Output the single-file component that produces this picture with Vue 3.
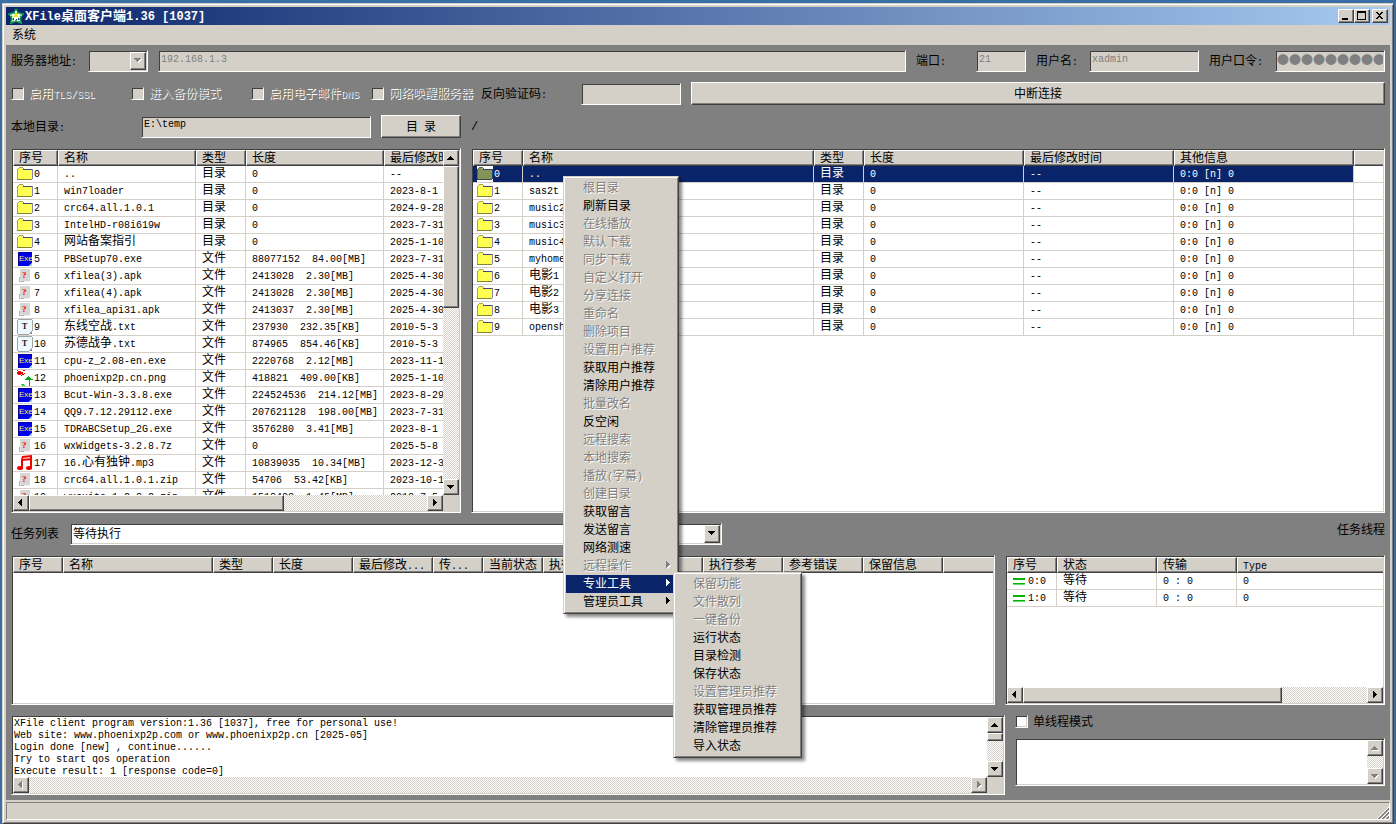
<script setup>
import { h } from 'vue'

// Latin runs are half as wide as a Han character, so they are set in a smaller monospace size.
const Txt = (props) =>
  h('span', { class: 'txt' }, String(props.v).split(/([\x20-\x7e]+)/).map((s, i) => (i % 2 ? h('span', { class: 'lat' }, s) : s)))
Txt.props = ['v']

const arrows = {
  up: 'M7 6h1v1h1v1h1v1h1v1H4V9h1V8h1V7h1z',
  down: 'M4 6h7v1h-1v1H9v1H8v1H7V9H6V8H5V7H4z',
  left: 'M9 4v7H8v-1H7V9H6V8H5V7h1V6h1V5h1V4z',
  right: 'M6 4v7h1v-1h1V9h1V8h1V7H9V6H8V5H7V4z'
}
const Arrow = (props) =>
  h('svg', { class: 'arrow', width: 16, height: 16, viewBox: '0 0 16 16', 'shape-rendering': 'crispEdges', 'aria-hidden': 'true' }, [
    props.off ? h('path', { d: arrows[props.dir], fill: '#fff', transform: 'translate(1 1)' }) : null,
    h('path', { d: arrows[props.dir], fill: props.off ? '#808080' : '#000' })
  ])
Arrow.props = { dir: String, off: Boolean }

const options = ['启用TLS/SSL', '进入备份模式', '启用电子邮件DNS', '网络唤醒服务器']

const localCols = [45, 138, 50, 138, 120]
const localHead = ['序号', '名称', '类型', '长度', '最后修改时间']
const localFiles = [
  ['folder', '..', '0', '--'],
  ['folder', 'win7loader', '0', '2023-8-1'],
  ['folder', 'crc64.all.1.0.1', '0', '2024-9-28'],
  ['folder', 'IntelHD-r08i619w', '0', '2023-7-31'],
  ['folder', '网站备案指引', '0', '2025-1-10'],
  ['exe', 'PBSetup70.exe', '88077152  84.00[MB]', '2023-7-31'],
  ['unknown', 'xfilea(3).apk', '2413028  2.30[MB]', '2025-4-30'],
  ['unknown', 'xfilea(4).apk', '2413028  2.30[MB]', '2025-4-30'],
  ['unknown', 'xfilea_api31.apk', '2413037  2.30[MB]', '2025-4-30'],
  ['text', '东线空战.txt', '237930  232.35[KB]', '2010-5-3'],
  ['text', '苏德战争.txt', '874965  854.46[KB]', '2010-5-3'],
  ['exe', 'cpu-z_2.08-en.exe', '2220768  2.12[MB]', '2023-11-1'],
  ['image', 'phoenixp2p.cn.png', '418821  409.00[KB]', '2025-1-10'],
  ['exe', 'Bcut-Win-3.3.8.exe', '224524536  214.12[MB]', '2023-8-29'],
  ['exe', 'QQ9.7.12.29112.exe', '207621128  198.00[MB]', '2023-7-31'],
  ['exe', 'TDRABCSetup_2G.exe', '3576280  3.41[MB]', '2023-8-1'],
  ['unknown', 'wxWidgets-3.2.8.7z', '0', '2025-5-8'],
  ['music', '16.心有独钟.mp3', '10839035  10.34[MB]', '2023-12-3'],
  ['unknown', 'crc64.all.1.0.1.zip', '54706  53.42[KB]', '2023-10-1'],
  ['unknown', 'wxsuite-1.2.8.2.zip', '1518483  1.45[MB]', '2018-7-5']
]
const kind = (icon) => (icon === 'folder' ? '目录' : '文件')

const remoteCols = [50, 291, 50, 160, 150, 180]
const remoteHead = ['序号', '名称', '类型', '长度', '最后修改时间', '其他信息', '']
const remoteFiles = ['..', 'sas2t', 'music2', 'music3', 'music4', 'myhome', '电影1', '电影2', '电影3', 'openshare']

const taskCols = [50, 150, 60, 80, 80, 50, 60, 80, 80, 80, 80, 80]
const taskHead = ['序号', '名称', '类型', '长度', '最后修改...', '传...', '当前状态', '执行', '', '执行参考', '参考错误', '保留信息', '']

const threadCols = [50, 100, 80]
const threadHead = ['序号', '状态', '传输', 'Type']

const logText = [
  'XFile client program version:1.36 [1037], free for personal use!',
  'Web site: www.phoenixp2p.com or www.phoenixp2p.cn [2025-05]',
  'Login done [new] , continue......',
  'Try to start qos operation',
  'Execute result: 1 [response code=0]'
].join('\n')

const on = (label) => ({ label })
const off = (label) => ({ label, disabled: true })
const menu = [
  off('根目录'), on('刷新目录'), off('在线播放'), off('默认下载'), off('同步下载'), off('自定义打开'),
  off('分享连接'), off('重命名'), off('删除项目'), off('设置用户推荐'), on('获取用户推荐'), on('清除用户推荐'),
  off('批量改名'), on('反空闲'), off('远程搜索'), off('本地搜索'), off('播放(字幕)'), off('创建目录'),
  on('获取留言'), on('发送留言'), on('网络测速'),
  { label: '远程操作', disabled: true, sub: true },
  { label: '专业工具', sub: true, active: true },
  { label: '管理员工具', sub: true }
]
const submenu = [
  off('保留功能'), off('文件散列'), off('一键备份'), on('运行状态'), on('目录检测'), on('保存状态'),
  off('设置管理员推荐'), on('获取管理员推荐'), on('清除管理员推荐'), on('导入状态')
]
</script>

<template>
  <div class="desktop">
    <svg class="defs" aria-hidden="true">
      <symbol id="i-folder" viewBox="0 0 16 16">
        <path d="M1 4V2h4l2 2h8v9H1z" fill="#ffff52" />
        <path d="M0 13V3h1v10zM1 2h1V1h4v1h1v1H6V2H2v1H1z" fill="#a5a54a" />
        <path d="M6 3h9v1H6z" fill="#4a4a6b" />
        <path d="M15 3h1v10h-1z" fill="#8484b5" />
        <path d="M0 13h15v1H0z" fill="#84842a" />
      </symbol>
      <symbol id="i-folder-sel" viewBox="0 0 16 16">
        <path d="M0 0h16v16H0z" fill="#fff" />
        <path d="M1 4V2h4l2 2h8v9H1z" fill="#84935a" />
        <path d="M0 13V3h1v10zM1 2h1V1h4v1h1v1H6V2H2v1H1z" fill="#5a6650" />
        <path d="M6 3h9v1H6zM15 3h1v10h-1z" fill="#31426b" />
        <path d="M0 13h15v1H0z" fill="#3a4a4a" />
      </symbol>
      <symbol id="i-exe" viewBox="0 0 16 16">
        <path d="M1 1h14v11l-3 3H1z" fill="#0000ee" />
        <path d="M1 1h14v1H2v13H1z" fill="#000094" />
        <path d="M12 15l3-3v3z" fill="#8ce0f0" />
        <text x="2" y="10" font-size="8" font-family="Liberation Sans, sans-serif" fill="#f0f050">Exe</text>
      </symbol>
      <symbol id="i-unknown" viewBox="0 0 16 16">
        <path d="M3 1h10v12H3z" fill="#d6d6d6" />
        <path d="M2 10l4 4H2zM6 13h7v1H6z" fill="#f0f0f0" />
        <path d="M2 9h1v5H2zM3 13h4v1H3z" fill="#b4b4b4" />
        <text x="5" y="10" font-size="9" font-weight="700" font-family="Liberation Serif, serif" fill="#f00000">?</text>
      </symbol>
      <symbol id="i-text" viewBox="0 0 16 16">
        <path d="M1 1h14v11l-3 3H1z" fill="#eef8ff" />
        <path d="M0 1h1v14H0zM1 0h14v1H1zM15 1h1v11h-1zM1 15h11v1H1zM14 12h1v1h-1zM13 13h1v1h-1zM12 14h1v1h-1z" fill="#9ca6ad" />
        <path d="M15 13v2h-2z" fill="#5a646b" />
        <text x="5" y="10" font-size="8" font-weight="700" font-family="Liberation Serif, serif" fill="#101820">T</text>
      </symbol>
      <symbol id="i-image" viewBox="0 0 16 16">
        <path d="M1 1h3v1h1v2H4v1H1V4H0V2h1zM6 0h2v1H6zM5 2h1v2h1v1H5zM7 3h1v1H7zM0 0h1v1H0zM4 5h1v1H4z" fill="#e80000" />
        <path d="M11 6h1v1h1v1h1v1h2v1h-3v6h-1v-6H8V9h1V8h1V7h1z" fill="#00a818" />
        <path d="M4 14h3v1h1v1H5v-1H4z" fill="#20d040" />
      </symbol>
      <symbol id="i-music" viewBox="0 0 16 16">
        <path d="M5 1l10-1v2L5 3zM5 4l10-1v2L5 6z" fill="#f00000" />
        <path d="M5 1h1v13H4V5zM13 1h2v12h-2z" fill="#f00000" />
        <ellipse cx="3" cy="13" rx="3" ry="2" fill="#f00000" />
        <ellipse cx="12" cy="13" rx="3" ry="2" fill="#f00000" />
      </symbol>
      <symbol id="i-queue" viewBox="0 0 16 16">
        <path d="M2 5h12v2H2zM2 10h12v2H2z" fill="#00b400" />
        <path d="M2 11h12v1H2z" fill="#66dd66" />
      </symbol>
    </svg>

    <div class="window">
      <header class="title">
        <svg width="16" height="16" viewBox="0 0 16 16" aria-hidden="true">
          <path d="M8 1l2 4 5 1-3 4 1 5-5-2-5 2 1-5-3-4 5-1z" fill="#e8fff0" stroke="#10a048" stroke-width="2" stroke-dasharray="2 1" />
          <path d="M8 3l1 3 3 1-2 2v3l-2-2-2 2V9L4 7l3-1z" fill="#fff" />
          <path d="M7 5h2v2h1v2H6V7h1z" fill="#f4e800" />
          <path d="M5 10h1v2H5zM10 10h1v2h-1zM8 11h1v1H8z" fill="#303870" />
        </svg>
        <h1><Txt v="XFile桌面客户端1.36 [1037]" /></h1>
        <button class="cap" aria-label="最小化"><svg width="12" height="10" shape-rendering="crispEdges"><path d="M2 7h6v2H2z" /></svg></button>
        <button class="cap" aria-label="最大化"><svg width="12" height="10" shape-rendering="crispEdges"><path d="M1 0h9v9H1zM2 2v6h7V2z" fill-rule="evenodd" /></svg></button>
        <button class="cap close" aria-label="关闭"><svg width="12" height="10" shape-rendering="crispEdges"><path d="M2 1h2v1h1v1h1V2h1V1h2v1H8v1H7v1H6v1h1v1h1v1h1v1H7V7H6V6H5v1H4v1H2V7h1V6h1V5h1V4H4V3H3V2H2z" /></svg></button>
      </header>
      <nav class="menubar"><button>系统</button></nav>

      <main>
        <div class="row r1">
          <label class="l-host" for="proto"><Txt v="服务器地址:" /></label>
          <div class="combo off c-proto"><select id="proto" disabled><option></option></select><span class="btn"><Arrow dir="down" off /></span></div>
          <input class="grow" aria-label="服务器地址" value="192.168.1.3" disabled>
          <label class="l-port" for="port"><Txt v="端口:" /></label>
          <input id="port" class="w50" value="21" disabled>
          <label class="l-user" for="user"><Txt v="用户名:" /></label>
          <input id="user" class="w110" value="xadmin" disabled>
          <label class="l-pass" for="pass"><Txt v="用户口令:" /></label>
          <input id="pass" class="w110 dots" value="●●●●●●●●●" disabled>
        </div>
        <div class="row">
          <label v-for="o in options" :key="o" class="check off"><input type="checkbox" disabled><Txt :v="o" /></label>
          <label class="l-code" for="code"><Txt v="反向验证码:" /></label>
          <input id="code" class="w100" disabled>
          <button class="push grow">中断连接</button>
        </div>
        <div class="row">
          <label class="l-dir" for="dir"><Txt v="本地目录:" /></label>
          <input id="dir" class="w230" value="E:\temp" readonly>
          <button class="push w80"><Txt v="目 录" /></button>
          <span class="path">/</span>
        </div>

        <section class="lists">
          <div class="panel local">
            <div class="body">
              <div class="view">
                <table>
                  <colgroup><col v-for="(w, i) in localCols" :key="i" :style="{ width: w + 'px' }"></colgroup>
                  <thead><tr><th v-for="t in localHead" :key="t">{{ t }}</th></tr></thead>
                  <tbody>
                    <tr v-for="(f, i) in localFiles" :key="i">
                      <td class="ic"><svg width="16" height="16"><use :href="'#i-' + f[0]" /></svg><Txt :v="i" /></td>
                      <td><Txt :v="f[1]" /></td>
                      <td>{{ kind(f[0]) }}</td>
                      <td><Txt :v="f[2]" /></td>
                      <td><Txt :v="f[3]" /></td>
                    </tr>
                  </tbody>
                </table>
              </div>
              <div class="vbar"><span class="btn"><Arrow dir="up" /></span><span class="thumb t142"></span><i></i><span class="btn"><Arrow dir="down" /></span></div>
            </div>
            <div class="hbar"><span class="btn"><Arrow dir="left" /></span><span class="thumb t255"></span><i></i><span class="btn"><Arrow dir="right" /></span><span class="corner"></span></div>
          </div>

          <div class="panel grow">
            <div class="view">
              <table>
                <colgroup><col v-for="(w, i) in remoteCols" :key="i" :style="{ width: w + 'px' }"><col></colgroup>
                <thead><tr><th v-for="t in remoteHead" :key="t">{{ t }}</th></tr></thead>
                <tbody>
                  <tr v-for="(f, i) in remoteFiles" :key="f" :class="{ selected: i === 0 }">
                    <td class="ic"><svg width="16" height="16"><use :href="i ? '#i-folder' : '#i-folder-sel'" /></svg><Txt :v="i" /></td>
                    <td><Txt :v="f" /></td>
                    <td>目录</td>
                    <td><Txt v="0" /></td>
                    <td><Txt v="--" /></td>
                    <td><Txt v="0:0 [n] 0" /></td>
                    <td></td>
                  </tr>
                </tbody>
              </table>
            </div>
          </div>
        </section>

        <div class="row r5">
          <label class="l-task" for="task">任务列表</label>
          <div class="combo c-task"><select id="task"><option>等待执行</option></select><span class="btn"><Arrow dir="down" /></span></div>
          <span class="threads-title">任务线程</span>
        </div>

        <section class="jobs">
          <div class="panel grow">
            <div class="view">
              <table>
                <colgroup><col v-for="(w, i) in taskCols" :key="i" :style="{ width: w + 'px' }"><col></colgroup>
                <thead><tr><th v-for="(t, i) in taskHead" :key="i"><Txt :v="t" /></th></tr></thead>
              </table>
            </div>
          </div>
          <div class="panel threads">
            <div class="view">
              <table>
                <colgroup><col v-for="(w, i) in threadCols" :key="i" :style="{ width: w + 'px' }"><col></colgroup>
                <thead><tr><th v-for="t in threadHead" :key="t"><Txt :v="t" /></th></tr></thead>
                <tbody>
                  <tr v-for="n in 2" :key="n">
                    <td class="ic"><svg width="16" height="16" shape-rendering="crispEdges"><use href="#i-queue" /></svg><Txt :v="(n - 1) + ':0'" /></td>
                    <td>等待</td>
                    <td><Txt v="0 : 0" /></td>
                    <td><Txt v="0" /></td>
                  </tr>
                </tbody>
              </table>
            </div>
            <div class="hbar"><span class="btn"><Arrow dir="left" /></span><span class="thumb t259"></span><i></i><span class="btn"><Arrow dir="right" /></span></div>
          </div>
        </section>

        <section class="logs">
          <div class="panel grow">
            <div class="body">
              <textarea aria-label="日志" readonly :value="logText"></textarea>
              <div class="vbar"><span class="btn"><Arrow dir="up" /></span><span class="thumb t8"></span><i></i><span class="btn"><Arrow dir="down" /></span></div>
            </div>
            <div class="hbar"><span class="btn"><Arrow dir="left" off /></span><i></i><span class="btn"><Arrow dir="right" off /></span><span class="corner"></span></div>
          </div>
          <div class="side">
            <label class="check"><input type="checkbox"><Txt v="单线程模式" /></label>
            <div class="panel note">
              <div class="body">
                <textarea aria-label="消息"></textarea>
                <div class="vbar"><span class="btn"><Arrow dir="up" off /></span><i></i><span class="btn"><Arrow dir="down" off /></span></div>
              </div>
            </div>
          </div>
        </section>
      </main>

      <footer>
        <div class="status">
          <svg width="12" height="12" viewBox="0 0 12 12" aria-hidden="true">
            <path d="M0 12L12 0M4 12l8-8M8 12l4-4" stroke="#fff" />
            <path d="M1 12L12 1M2 12L12 2M5 12l7-7M6 12l6-6M9 12l3-3M10 12l2-2" stroke="#808080" />
          </svg>
        </div>
      </footer>
    </div>

    <ul class="popup main-menu">
      <li v-for="m in menu" :key="m.label"><button :disabled="m.disabled" :class="{ active: m.active }"><Txt :v="m.label" /><svg v-if="m.sub" width="5" height="8" viewBox="0 0 5 8" shape-rendering="crispEdges"><path class="hi" d="M1 1v7h1V7h1V6h1V5h1V4H4V3H3V2H2V1z" /><path class="fg" d="M0 0v7h1V6h1V5h1V4h1V3H3V2H2V1H1V0z" /></svg></button></li>
    </ul>
    <ul class="popup sub-menu">
      <li v-for="m in submenu" :key="m.label"><button :disabled="m.disabled"><Txt :v="m.label" /></button></li>
    </ul>
  </div>
</template>

<style>
html, body { margin: 0; background: #3a6ea5; }
</style>

<style scoped>
.desktop, .desktop * { box-sizing: border-box; }
.desktop {
  position: relative;
  height: 100vh;
  min-height: 600px;
  padding: 3px 2px 0;
  overflow: hidden;
  background: #3a6ea5;
  color: #000;
  font: 12px/16px "Liberation Mono", "Noto Sans CJK SC", monospace;
}
.defs { display: none; }
button, input, select, textarea { margin: 0; font: inherit; color: inherit; border-radius: 0; outline: 0; }
:deep(.txt) { white-space: pre; }
:deep(.lat) { font-size: 10px; line-height: 1; }
:deep(.arrow) { display: block; }

.window {
  display: flex;
  flex-direction: column;
  height: 100%;
  padding: 3px;
  background: #d4d0c8;
  border: 1px solid;
  border-color: #d4d0c8 #404040 #404040 #d4d0c8;
  box-shadow: inset 1px 1px #fff, inset -1px -1px #808080;
}
.title {
  display: flex;
  align-items: center;
  height: 18px;
  padding: 0 2px;
  background: linear-gradient(90deg, #0a246a, #a6caf0);
  color: #fff;
}
.title h1 { flex: 1; margin: 0 0 0 1px; padding-top: 2px; font-size: 13px; line-height: 16px; font-weight: 700; }
.title :deep(.lat) { font-size: 12px; }
.cap, .btn, .thumb, .push {
  background: #d4d0c8;
  border: 1px solid;
  border-color: #fff #404040 #404040 #fff;
  box-shadow: inset -1px -1px #808080;
}
.cap { display: flex; width: 16px; height: 14px; padding: 1px; }
.cap.close { margin-left: 2px; }
.cap svg { display: block; fill: #000; }
.menubar { height: 20px; padding: 2px 6px 0; }
.menubar button { display: block; padding: 0; border: 0; background: none; line-height: 18px; }

main {
  flex: 1;
  min-height: 0;
  display: flex;
  flex-direction: column;
  gap: 10px;
  padding: 5px;
  background: #808080;
}
.row { display: flex; align-items: center; gap: 10px; height: 23px; }
.row > label:not(.check) { padding-top: 2px; }
.r1, .r5 { height: 22px; }
.grow { flex: 1; min-width: 0; }
.w50 { width: 50px; }
.w80 { width: 80px; }
.w100 { width: 100px; }
.w110 { width: 110px; }
.w230 { width: 230px; }
.l-host { width: 67px; }
.l-port { width: 50px; }
.l-user { width: 43px; }
.l-pass { width: 56px; }
.l-code { width: 90px; }
.l-dir { width: 120px; }
.l-task { width: 49px; }
.row input:not([type]), .combo {
  height: 22px;
  background: #d4d0c8;
  border: 1px solid;
  border-color: #808080 #fff #fff #808080;
  box-shadow: inset 1px 1px #404040, inset -1px -1px #d4d0c8;
}
.row input:not([type]) { padding: 0 2px 4px; font-size: 10px; }
.row input:disabled { color: #808080; }
.row input.dots { font-family: "Noto Sans CJK SC", sans-serif; font-size: 12px; padding: 0 1px 3px; }
.combo { display: flex; padding: 1px; background: #fff; }
.combo.off { background: #d4d0c8; }
.combo select { flex: 1; min-width: 0; padding: 1px 1px 0; border: 0; background: transparent; appearance: none; }
.combo .btn { height: 18px; }
.c-proto { width: 60px; }
.c-task { width: 652px; }
.threads-title { margin-left: auto; align-self: flex-start; line-height: 16px; }
.push { height: 23px; padding: 2px 0 0; text-align: center; }

.check { display: flex; align-items: center; gap: 5px; width: 110px; }
.check:nth-of-type(4) { width: 100px; }
.check :deep(.txt) { padding-top: 2px; }
.check input {
  appearance: none;
  flex: none;
  width: 13px;
  height: 13px;
  background: #fff;
  border: 1px solid;
  border-color: #808080 #fff #fff #808080;
  box-shadow: inset 1px 1px #404040, inset -1px -1px #d4d0c8;
}
.check.off { color: #808080; text-shadow: 1px 1px #fff; white-space: nowrap; }
.check.off input { background: #d4d0c8; }

.lists { flex: 1; min-height: 0; display: flex; gap: 10px; }
.jobs { display: flex; gap: 10px; height: 150px; }
.logs { display: flex; gap: 10px; height: 80px; }
.panel {
  display: flex;
  flex-direction: column;
  padding: 1px;
  background: #fff;
  border: 1px solid;
  border-color: #808080 #fff #fff #808080;
  box-shadow: inset 1px 1px #404040, inset -1px -1px #d4d0c8;
}
.local { width: 450px; }
.threads { width: 380px; }
.side { display: flex; flex-direction: column; gap: 10px; width: 370px; }
.side .check { height: 13px; }
.note { height: 48px; }
.body { flex: 1; min-height: 0; display: flex; }
.view { flex: 1; min-width: 0; min-height: 0; overflow: hidden; }
textarea {
  flex: 1;
  min-width: 0;
  padding: 1px;
  border: 0;
  background: #fff;
  resize: none;
  overflow: hidden;
  font-size: 10px;
  line-height: 12px;
}

.btn { flex: none; width: 16px; height: 16px; overflow: hidden; }
.btn :deep(.arrow) { margin: -1px 0 0 -1px; }
.vbar, .hbar { display: flex; background: repeating-conic-gradient(#fff 0 25%, #d4d0c8 0 50%) 0 0 / 2px 2px; }
.vbar { flex-direction: column; width: 16px; }
.hbar { height: 16px; }
.vbar i, .hbar i { flex: 1; }
.corner { width: 16px; background: #d4d0c8; }
.t142 { height: 142px; }
.t8 { height: 8px; }
.t255 { width: 255px; }
.t259 { width: 259px; }

table { width: 100%; table-layout: fixed; border-collapse: separate; border-spacing: 0; }
.local table { width: 491px; }
th {
  height: 16px;
  padding: 2px 0 0 5px;
  overflow: hidden;
  background: #d4d0c8;
  border: 1px solid;
  border-color: #fff #404040 #404040 #fff;
  box-shadow: inset -1px -1px #808080;
  font-weight: 400;
  line-height: 12px;
  text-align: left;
  white-space: nowrap;
}
th:last-child { border-right: 0; box-shadow: inset 0 -1px #808080; }
td {
  height: 17px;
  padding: 0 0 0 6px;
  overflow: hidden;
  border: solid #d4d0c8;
  border-width: 0 1px 1px 0;
  line-height: 16px;
  white-space: nowrap;
}
td:last-child { border-right: 0; }
td.ic { padding-left: 4px; }
td.ic svg { float: left; margin-right: 1px; }
.selected td { background: #0a246a; color: #fff; }
.selected td:last-child { background: #fff; }

footer { padding-top: 2px; }
.status {
  display: flex;
  justify-content: flex-end;
  align-items: flex-end;
  height: 18px;
  border: 1px solid;
  border-color: #808080 #fff #fff #808080;
}
.status svg { display: block; }

.popup {
  position: absolute;
  margin: 0;
  padding: 1px;
  list-style: none;
  background: #d4d0c8;
  border: 1px solid;
  border-color: #d4d0c8 #404040 #404040 #d4d0c8;
  box-shadow: inset 1px 1px #fff, inset -1px -1px #808080, 3px 3px 3px rgba(0, 0, 0, .45);
}
.popup li { padding: 0 1px; }
.popup li:first-child { padding-top: 1px; }
.popup li:last-child { padding-bottom: 1px; }
.popup button {
  display: flex;
  align-items: center;
  justify-content: space-between;
  width: 100%;
  height: 18px;
  padding: 0 5px 0 17px;
  border: 0;
  background: none;
  line-height: 16px;
}
.popup button :deep(.txt) { padding-top: 2px; }
.popup button svg { margin-bottom: 2px; }
.popup button:disabled { color: #808080; text-shadow: 1px 1px #fff; }
.popup button.active { background: #0a246a; color: #fff; }
.fg { fill: currentColor; }
.hi { fill: none; }
.popup button:disabled .hi { fill: #fff; }
.main-menu { left: 563px; top: 176px; width: 116px; }
.sub-menu { left: 673px; top: 572px; width: 129px; }
</style>
